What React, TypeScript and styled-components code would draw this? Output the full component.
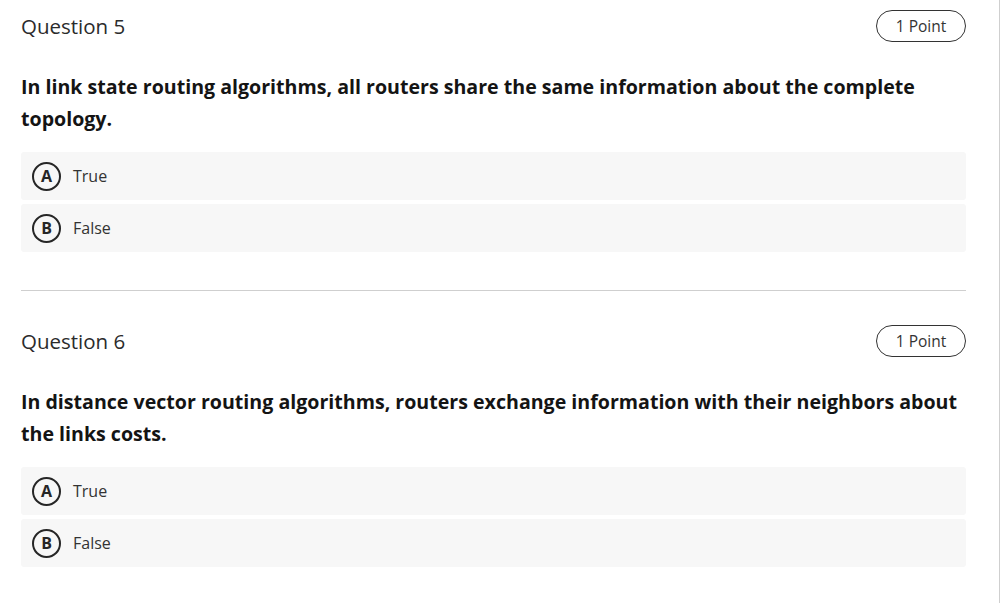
import React from 'react';
import styled, { createGlobalStyle } from 'styled-components';

const GlobalStyle = createGlobalStyle`
  html, body {
    margin: 0;
    padding: 0;
    background: #fff;
  }
  body {
    font-family: "Open Sans", "Liberation Sans", sans-serif;
    color: #222;
  }
`;

const Panel = styled.div`
  width: 1000px;
  height: 603px;
  box-sizing: border-box;
  border-right: 1px solid #cfcfcf;
  padding: 0 33px 0 21px;
  overflow: hidden;
`;

const Section = styled.section<{ $top: number }>`
  padding-top: ${({ $top }) => $top}px;
`;

const Header = styled.div`
  display: flex;
  align-items: center;
  justify-content: space-between;
  height: 32px;
`;

const Title = styled.h2`
  margin: 0;
  font-size: 20.5px;
  font-weight: 400;
  color: #2b2b2b;
`;

const PointBadge = styled.span`
  display: inline-flex;
  align-items: center;
  justify-content: center;
  width: 90px;
  height: 32px;
  box-sizing: border-box;
  border: 1px solid #333;
  border-radius: 16px;
  font-size: 15.5px;
  color: #333;
`;

const Prompt = styled.p`
  margin: 29px 0 0;
  font-size: 19.6px;
  line-height: 32px;
  font-weight: 700;
  color: #141414;
`;

const Options = styled.div`
  display: flex;
  flex-direction: column;
  gap: 4px;
  margin-top: 17px;
`;

const Option = styled.div`
  display: flex;
  align-items: center;
  gap: 12px;
  height: 48px;
  padding-left: 11px;
  background: #f7f7f7;
  border-radius: 3px;
`;

const Letter = styled.span`
  display: inline-flex;
  align-items: center;
  justify-content: center;
  width: 25px;
  height: 25px;
  border: 2px solid #262626;
  border-radius: 50%;
  font-size: 16px;
  font-weight: 700;
  color: #262626;
`;

const OptionText = styled.span`
  font-size: 16px;
  color: #333;
`;

const Divider = styled.hr`
  margin: 38px 0 0;
  border: 0;
  border-top: 1px solid #cfcfcf;
`;

type Question = { title: string; text: string; top: number };

const questions: Question[] = [
  {
    title: 'Question 5',
    text: 'In link state routing algorithms, all routers share the same information about the complete topology.',
    top: 10,
  },
  {
    title: 'Question 6',
    text: 'In distance vector routing algorithms, routers exchange information with their neighbors about the links costs.',
    top: 34,
  },
];

export default function App() {
  return (
    <Panel>
      <GlobalStyle />
      {questions.map((q, i) => (
        <React.Fragment key={q.title}>
          <Section $top={q.top}>
            <Header>
              <Title>{q.title}</Title>
              <PointBadge>1 Point</PointBadge>
            </Header>
            <Prompt>{q.text}</Prompt>
            <Options>
              <Option>
                <Letter>A</Letter>
                <OptionText>True</OptionText>
              </Option>
              <Option>
                <Letter>B</Letter>
                <OptionText>False</OptionText>
              </Option>
            </Options>
          </Section>
          {i === 0 && <Divider />}
        </React.Fragment>
      ))}
    </Panel>
  );
}
